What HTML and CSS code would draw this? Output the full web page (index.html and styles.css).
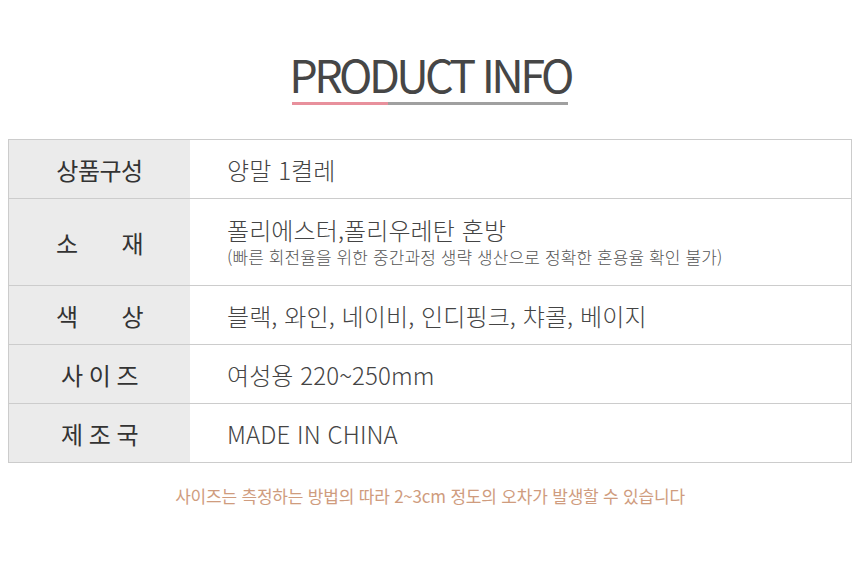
FILE: index.html
```html
<!DOCTYPE html>
<html lang="ko">
<head>
<meta charset="utf-8">
<link rel="stylesheet" href="styles.css">
</head>
<body>
<div class="page">
  <div class="title-wrap">
    <h1 class="title">PRODUCT INFO</h1>
    <div class="underline"><span class="pink"></span><span class="grey"></span></div>
  </div>
  <table class="info">
    <tr class="r1"><th>상품구성</th><td>양말 1켤레</td></tr>
    <tr class="r2"><th><span class="sp2">소</span>재</th><td><div class="main">폴리에스터,폴리우레탄 혼방</div><div class="sub">(빠른 회전율을 위한 중간과정 생략 생산으로 정확한 혼용율 확인 불가)</div></td></tr>
    <tr class="r1"><th><span class="sp2">색</span>상</th><td>블랙, 와인, 네이비, 인디핑크, 챠콜, 베이지</td></tr>
    <tr class="r1"><th class="sp1">사 이 즈</th><td>여성용 220~250mm</td></tr>
    <tr class="r1"><th class="sp1">제 조 국</th><td>MADE IN CHINA</td></tr>
  </table>
  <p class="note">사이즈는 측정하는 방법의 따라 2~3cm 정도의 오차가 발생할 수 있습니다</p>
</div>
</body>
</html>
```

FILE: styles.css
```css
html, body { margin: 0; padding: 0; background: #fff; }
body { font-family: "Noto Sans CJK KR", "Noto Sans", sans-serif; }
.page { padding: 48px 8px 0 8px; }
.title-wrap { display: flex; flex-direction: column; align-items: center; }
.title {
  margin: 0;
  font-size: 45px;
  font-weight: 400;
  line-height: 52px;
  letter-spacing: -3.6px;
  color: #464646;
}
.underline { display: flex; width: 276px; height: 3px; margin-top: 2px; }
.underline .pink { width: 96px; background: #e8909c; }
.underline .grey { flex: 1; background: #a0a0a0; }
.info {
  margin-top: 34px;
  width: 844px;
  border-collapse: collapse;
  border: 1px solid #cccccc;
}
.info th, .info td { border-top: 1px solid #cccccc; border-bottom: 1px solid #cccccc; padding: 0; }
.info th {
  width: 181px;
  background: #ebebeb;
  font-weight: 400;
  font-size: 24px;
  color: #333;
  text-align: center;
  letter-spacing: -0.5px;
}
.info td {
  padding-left: 37px;
  font-size: 24px;
  font-weight: 300;
  color: #444;
  text-align: left;
  letter-spacing: 0.1px;
}
.r1 { height: 59px; }
.r2 { height: 87px; }
.sp2 { margin-right: 44px; }
.sp1 { letter-spacing: 6px; }
.main { line-height: 30px; }
.sub { font-size: 17px; line-height: 24px; letter-spacing: 0.1px; margin-top: 0; color: #555; }
.note {
  margin: 20px 0 0 0;
  text-align: center;
  font-size: 17px;
  font-weight: 400;
  color: #cf9c7e;
  letter-spacing: -0.2px;
}
```
